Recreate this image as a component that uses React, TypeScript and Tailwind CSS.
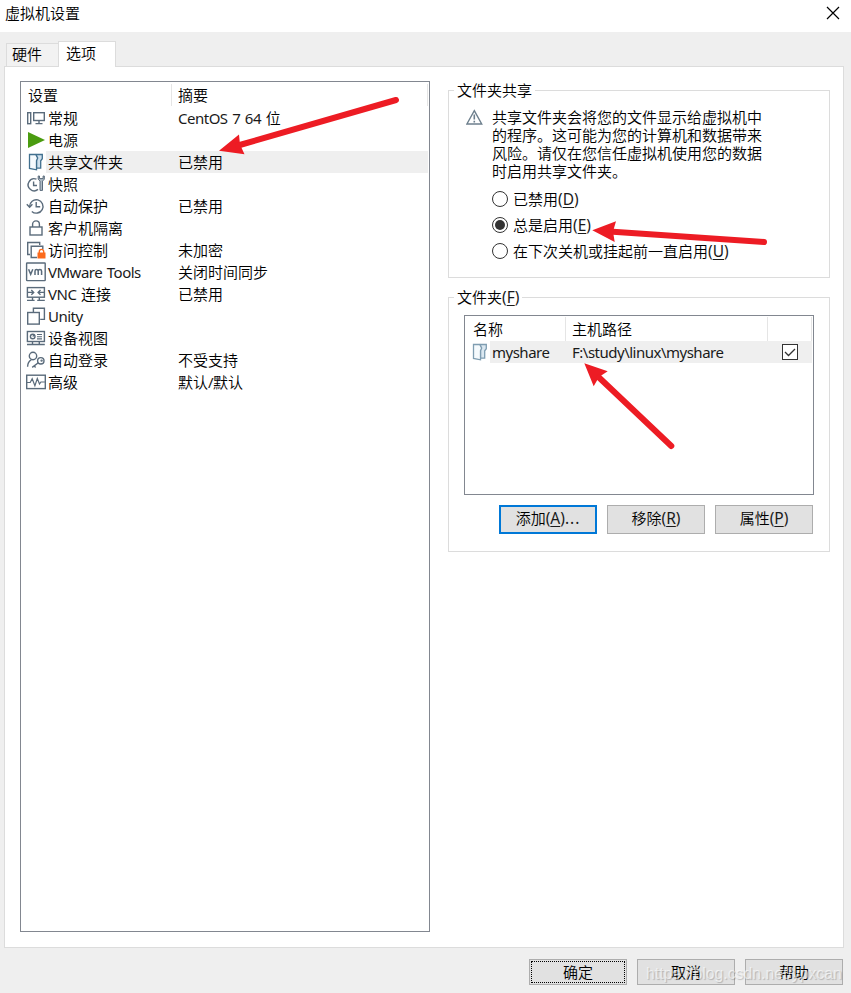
import type { ReactNode } from 'react';

interface SettingItem {
  name: string;
  summary?: string;
  icon: ReactNode;
  selected?: boolean;
}

const ink = '#5a6b7b';

function Icon({ children }: { children: ReactNode }) {
  return (
    <svg
      width="21"
      height="22"
      viewBox="0 0 21 22"
      className="shrink-0"
      fill="none"
      stroke={ink}
      strokeWidth="1.4"
    >
      {children}
    </svg>
  );
}

function FolderIcon({ light = false }: { light?: boolean }) {
  return (
    <g stroke={light ? '#7f9db1' : '#41708f'} strokeWidth="1.3">
      <path d="M11.5 3.5h5.8v4.2l-1.6 2.1v7.4h-4.2z" fill={light ? '#dbe8f1' : '#cfe1ee'} />
      <path d="M4.5 3.5h6.2l2 3.6-1.2 2.6v9.1l-7-1.4z" fill="#f5fafd" />
    </g>
  );
}

const items: SettingItem[] = [
  {
    name: '常规',
    summary: 'CentOS 7 64 位',
    icon: (
      <>
        <rect x="2.7" y="5.7" width="3" height="11" />
        <rect x="8.7" y="5.7" width="10.6" height="7.8" />
        <path d="M14 13.3v3M10.5 16.6h7" />
      </>
    ),
  },
  {
    name: '电源',
    icon: <path d="M3 3v16l17-8z" fill="#4a9c10" stroke="none" />,
  },
  {
    name: '共享文件夹',
    summary: '已禁用',
    selected: true,
    icon: <FolderIcon />,
  },
  {
    name: '快照',
    icon: (
      <>
        <path d="M11.5 6.2A6 6 0 1 0 13 16.4" />
        <path d="M8.6 8.5v4h3.4" />
        <path
          d="M13.2 3v3.2l1.8 1.9v9.3h2.5V8.1l1.8-1.9V3h-1.2v2.6h-3.6V3z"
          fill="#aebbc5"
          strokeWidth="1"
        />
      </>
    ),
  },
  {
    name: '自动保护',
    summary: '已禁用',
    icon: (
      <>
        <path d="M4.6 11.5A6.7 6.7 0 1 1 6.8 16.4" />
        <path d="M1.8 9.3l2.8 3 2.8-3" />
        <path d="M11.2 7v4.7h4" />
      </>
    ),
  },
  {
    name: '客户机隔离',
    icon: (
      <>
        <rect x="5" y="10" width="12" height="8" />
        <path d="M7.6 10V7.3a3.4 3.4 0 0 1 6.8 0V10" />
      </>
    ),
  },
  {
    name: '访问控制',
    summary: '未加密',
    icon: (
      <>
        <path d="M5 15.5H2.7V3.5h12V6" />
        <path d="M12 18.5H6.2V7.2h11.6v3" />
        <rect x="12.5" y="13.5" width="8" height="6" fill="#fb6a1c" stroke="none" />
        <path d="M14.3 14v-1.4a2.2 2.2 0 0 1 4.4 0V14" stroke="#fb6a1c" />
      </>
    ),
  },
  {
    name: 'VMware Tools',
    summary: '关闭时间同步',
    icon: (
      <>
        <rect x="1.6" y="2" width="18.6" height="17.6" rx="0.5" />
        <path
          d="M3.6 8.3l2.1 5 2.1-5M10 14V10.2a1.6 1.6 0 0 1 3.2 0V14M13.2 10.2a1.6 1.6 0 0 1 3.4 0V14"
          strokeWidth="1.5"
        />
      </>
    ),
  },
  {
    name: 'VNC 连接',
    summary: '已禁用',
    icon: (
      <>
        <rect x="2.4" y="4.6" width="17" height="9.6" />
        <path d="M7.5 14.2v3M14.3 14.2v3M2 17.4h7.6M12.2 17.4h7.6" />
        <path d="M2.5 9.4h6M6.3 7l2.4 2.4-2.4 2.4M19.3 9.4h-6M15.5 7l-2.4 2.4 2.4 2.4" />
      </>
    ),
  },
  {
    name: 'Unity',
    icon: (
      <>
        <path d="M8.4 7V3.2h11v11.2h-4.2" />
        <rect x="2.7" y="7.5" width="11.6" height="11.6" />
      </>
    ),
  },
  {
    name: '设备视图',
    icon: (
      <>
        <rect x="2.4" y="4.5" width="17" height="10" />
        <circle cx="7.7" cy="9.5" r="2.3" />
        <path d="M7.7 9.5l1.6-1.6M12 7.5h5M12 9.7h5M12 11.9h5" strokeWidth="1.1" />
        <path d="M7.5 14.5v2.8M14.3 14.5v2.8M2 17.5h17.8" />
      </>
    ),
  },
  {
    name: '自动登录',
    summary: '不受支持',
    icon: (
      <>
        <circle cx="8" cy="7" r="3.7" />
        <path d="M2.6 17.8c0-3.4 1.4-5.8 3.7-7" />
        <circle cx="15.8" cy="11.8" r="3.2" />
        <path d="M13.3 13.7L7.2 18.4M9.2 16.9l1.4 1.6" />
        <circle cx="16.6" cy="11.6" r="0.5" />
      </>
    ),
  },
  {
    name: '高级',
    summary: '默认/默认',
    icon: (
      <>
        <rect x="1.7" y="4.2" width="18.6" height="13.4" />
        <path d="M2 11.5h3.2l2-3.8 2.7 7 2.4-7.2 2.2 5.5 1.4-2h4" strokeWidth="1.2" />
      </>
    ),
  },
];

// Label with its keyboard accelerator, e.g. 添加(A)...
function Label({ text, hotkey, suffix }: { text: string; hotkey: string; suffix?: string }) {
  return (
    <span className="whitespace-nowrap">
      {text}
      <span className="text-[15.5px] font-normal text-[#1a1a1a]">
        (<span className="underline decoration-1 underline-offset-2">{hotkey}</span>)
        {suffix && <span className="tracking-[1px]">{suffix}</span>}
      </span>
    </span>
  );
}

// Latin words are set narrower than the Chinese around them
function Text({ children }: { children: string }) {
  return (
    <>
      {children.split(/([ -~]+)/).map((part, i) =>
        i % 2 ? (
          <span key={i} className="font-normal tracking-[-0.5px] text-[#1a1a1a] [word-spacing:1.2px]">
            {part}
          </span>
        ) : (
          part
        )
      )}
    </>
  );
}

function Radio({ checked = false, children }: { checked?: boolean; children: ReactNode }) {
  return (
    <div className="flex h-[26px] items-center gap-[5px] leading-[24px]">
      <span className="flex size-4 items-center justify-center rounded-full border border-[#333] bg-white">
        {checked && <span className="size-2.5 rounded-full bg-[#333]" />}
      </span>
      {children}
    </div>
  );
}

function Group({ title, className, children }: { title: ReactNode; className: string; children: ReactNode }) {
  return (
    <section className={`border border-[#dcdcdc] ${className}`}>
      <div className="-mt-[12px] ml-[5px] h-[22px] w-fit bg-white px-[3px] leading-[22px]">{title}</div>
      {children}
    </section>
  );
}

function Button({ className = '', children }: { className?: string; children: ReactNode }) {
  return (
    <button
      className={`flex w-[98px] items-center justify-center bg-[#e1e1e1] ${className}`}
    >
      {children}
    </button>
  );
}

function SettingsList() {
  return (
    <div className="h-[851px] w-[410px] border border-[#828790] bg-white">
      <div className="flex h-[25px] pt-0.5 pr-px pb-px">
        <div className="w-[151px] border-r border-[#e5e5e5] pl-[7px] leading-[22px]">设置</div>
        <div className="flex-1 border-r border-[#e5e5e5] pl-1.5 leading-[22px]">摘要</div>
      </div>
      {items.map((item) => (
        <div key={item.name} className="flex h-[22px] pr-px pl-1 leading-[22px]">
          <Icon>{item.icon}</Icon>
          <div className={`flex flex-1 pl-0.5 ${item.selected ? 'bg-[#efefef]' : ''}`}>
            <div className="w-[130px] whitespace-nowrap">
              <Text>{item.name}</Text>
            </div>
            <div className="whitespace-nowrap">
              <Text>{item.summary ?? ''}</Text>
            </div>
          </div>
        </div>
      ))}
    </div>
  );
}

function FolderSharing() {
  return (
    <Group title="文件夹共享" className="h-[188px]">
      <div className="mt-[7px] flex pl-[17px]">
        <svg width="17" height="17" viewBox="0 0 17 17" className="mt-px shrink-0" fill="none" stroke="#6d7f8d">
          <path d="M8.3 1.6L15.7 15H0.9z" strokeWidth="1.4" />
          <path d="M8.3 5.5v5M8.3 11.8v1.8" strokeWidth="1.6" />
        </svg>
        <p className="ml-[9px] leading-[18px] whitespace-nowrap">
          共享文件夹会将您的文件显示给虚拟机中
          <br />
          的程序。这可能为您的计算机和数据带来
          <br />
          风险。请仅在您信任虚拟机使用您的数据
          <br />
          时启用共享文件夹。
        </p>
      </div>
      <div className="mt-[6px] pl-[43px]">
        <Radio>
          <Label text="已禁用" hotkey="D" />
        </Radio>
        <Radio checked>
          <Label text="总是启用" hotkey="E" />
        </Radio>
        <Radio>
          <Label text="在下次关机或挂起前一直启用" hotkey="U" />
        </Radio>
      </div>
    </Group>
  );
}

function Folders() {
  return (
    <Group title={<Label text="文件夹" hotkey="F" />} className="mt-[19px] h-[255px]">
      <div className="mt-[7px] ml-[15px] h-[180px] w-[350px] border border-[#828790]">
        <div className="flex h-[25px] pt-px pr-px leading-[24px]">
          <div className="w-[101px] border-r border-[#e5e5e5] pl-2">名称</div>
          <div className="w-[202px] border-r border-[#e5e5e5] pl-1.5">主机路径</div>
          <div className="flex-1 border-r border-[#e5e5e5]" />
        </div>
        <div className="flex h-[22px] pr-px pl-1 leading-[22px]">
          <Icon>
            <FolderIcon light />
          </Icon>
          <div className="flex flex-1 items-center bg-[#efefef] pl-0.5">
            <div className="w-20">
              <Text>myshare</Text>
            </div>
            <div className="w-[210px]">
              <Text>{'F:\\study\\linux\\myshare'}</Text>
            </div>
            <svg width="16" height="16" viewBox="0 0 16 16" fill="#fff" stroke="#333">
              <rect x="0.5" y="0.5" width="15" height="15" />
              <path d="M3 8l3.5 3.5L13 5" fill="none" strokeWidth="1.3" />
            </svg>
          </div>
        </div>
      </div>
      <div className="mt-2.5 ml-[50px] flex h-[29px] gap-2.5">
        <Button className="border-2 border-[#0078d7] pb-0.5">
          <Label text="添加" hotkey="A" suffix="..." />
        </Button>
        <Button className="border border-[#adadad] pb-0.5">
          <Label text="移除" hotkey="R" />
        </Button>
        <Button className="border border-[#adadad] pb-0.5">
          <Label text="属性" hotkey="P" />
        </Button>
      </div>
    </Group>
  );
}

// Red hand-placed arrows over the dialog
function Arrows() {
  return (
    <svg
      className="pointer-events-none absolute inset-0"
      width="851"
      height="993"
      viewBox="0 0 851 993"
      fill="#ed1c24"
      stroke="none"
    >
      <path d="M219 150.7L239 134.5L240 144.5L244.5 154.3z" />
      <path d="M238 145.5L396 100" stroke="#ed1c24" strokeWidth="6" strokeLinecap="round" />
      <path d="M592.3 230.3L616 221.3L613 231.5L614.7 242z" />
      <path d="M613 231.7L764 242" stroke="#ed1c24" strokeWidth="6" strokeLinecap="round" />
      <path d="M584.3 363.3L607.7 371.3L599 377L593.7 386.3z" />
      <path d="M599 377.5L671.3 446" stroke="#ed1c24" strokeWidth="6" strokeLinecap="round" />
    </svg>
  );
}

export default function App() {
  return (
    <div className="relative flex h-[993px] w-[851px] flex-col overflow-hidden bg-[#efefef] font-['Noto_Sans','Noto_Sans_CJK_SC',sans-serif] text-[15px] font-[350] text-black">
      <header className="flex h-8 items-start justify-between bg-white pr-[11px] pl-[5px]">
        <h1 className="leading-[27px] font-[350]">虚拟机设置</h1>
        <svg width="14" height="14" viewBox="0 0 14 14" className="mt-1.5" stroke="#000" strokeWidth="1.2">
          <path d="M1 1l12 12M13 1L1 13" />
        </svg>
      </header>

      <nav className="flex h-[34px] items-end pl-1.5">
        <div className="h-[23px] w-[52px] border-t border-l border-[#dcdcdc] bg-[#f2f2f2] pl-[5px] leading-[21px]">
          硬件
        </div>
        <div className="relative z-10 -mb-px h-[26px] w-[58px] border border-b-0 border-[#dcdcdc] bg-white pl-[7px] leading-[23px]">
          选项
        </div>
      </nav>

      <main className="ml-1 flex h-[882px] w-[840px] gap-[18px] border border-[#dcdcdc] bg-white pt-[14px] pl-[15px]">
        <SettingsList />
        <div className="w-[382px] pt-[9px]">
          <FolderSharing />
          <Folders />
        </div>
      </main>

      <footer className="mt-[11px] flex h-[26px] justify-end gap-2.5 pr-2">
        <Button className="border border-[#adadad] p-px">
          <span className="flex size-full items-center justify-center border border-dotted border-black">确定</span>
        </Button>
        <Button className="border border-[#adadad]">取消</Button>
        <Button className="border border-[#adadad]">帮助</Button>
      </footer>

      <div className="absolute top-[963px] left-[646px] font-['Liberation_Sans',sans-serif] text-[15.8px] leading-[22px] font-normal whitespace-nowrap text-white/60 [text-shadow:1px_1px_1px_rgba(0,0,0,0.2)]">
        https://blog.csdn.net/ypxcan
      </div>
      <Arrows />
    </div>
  );
}
